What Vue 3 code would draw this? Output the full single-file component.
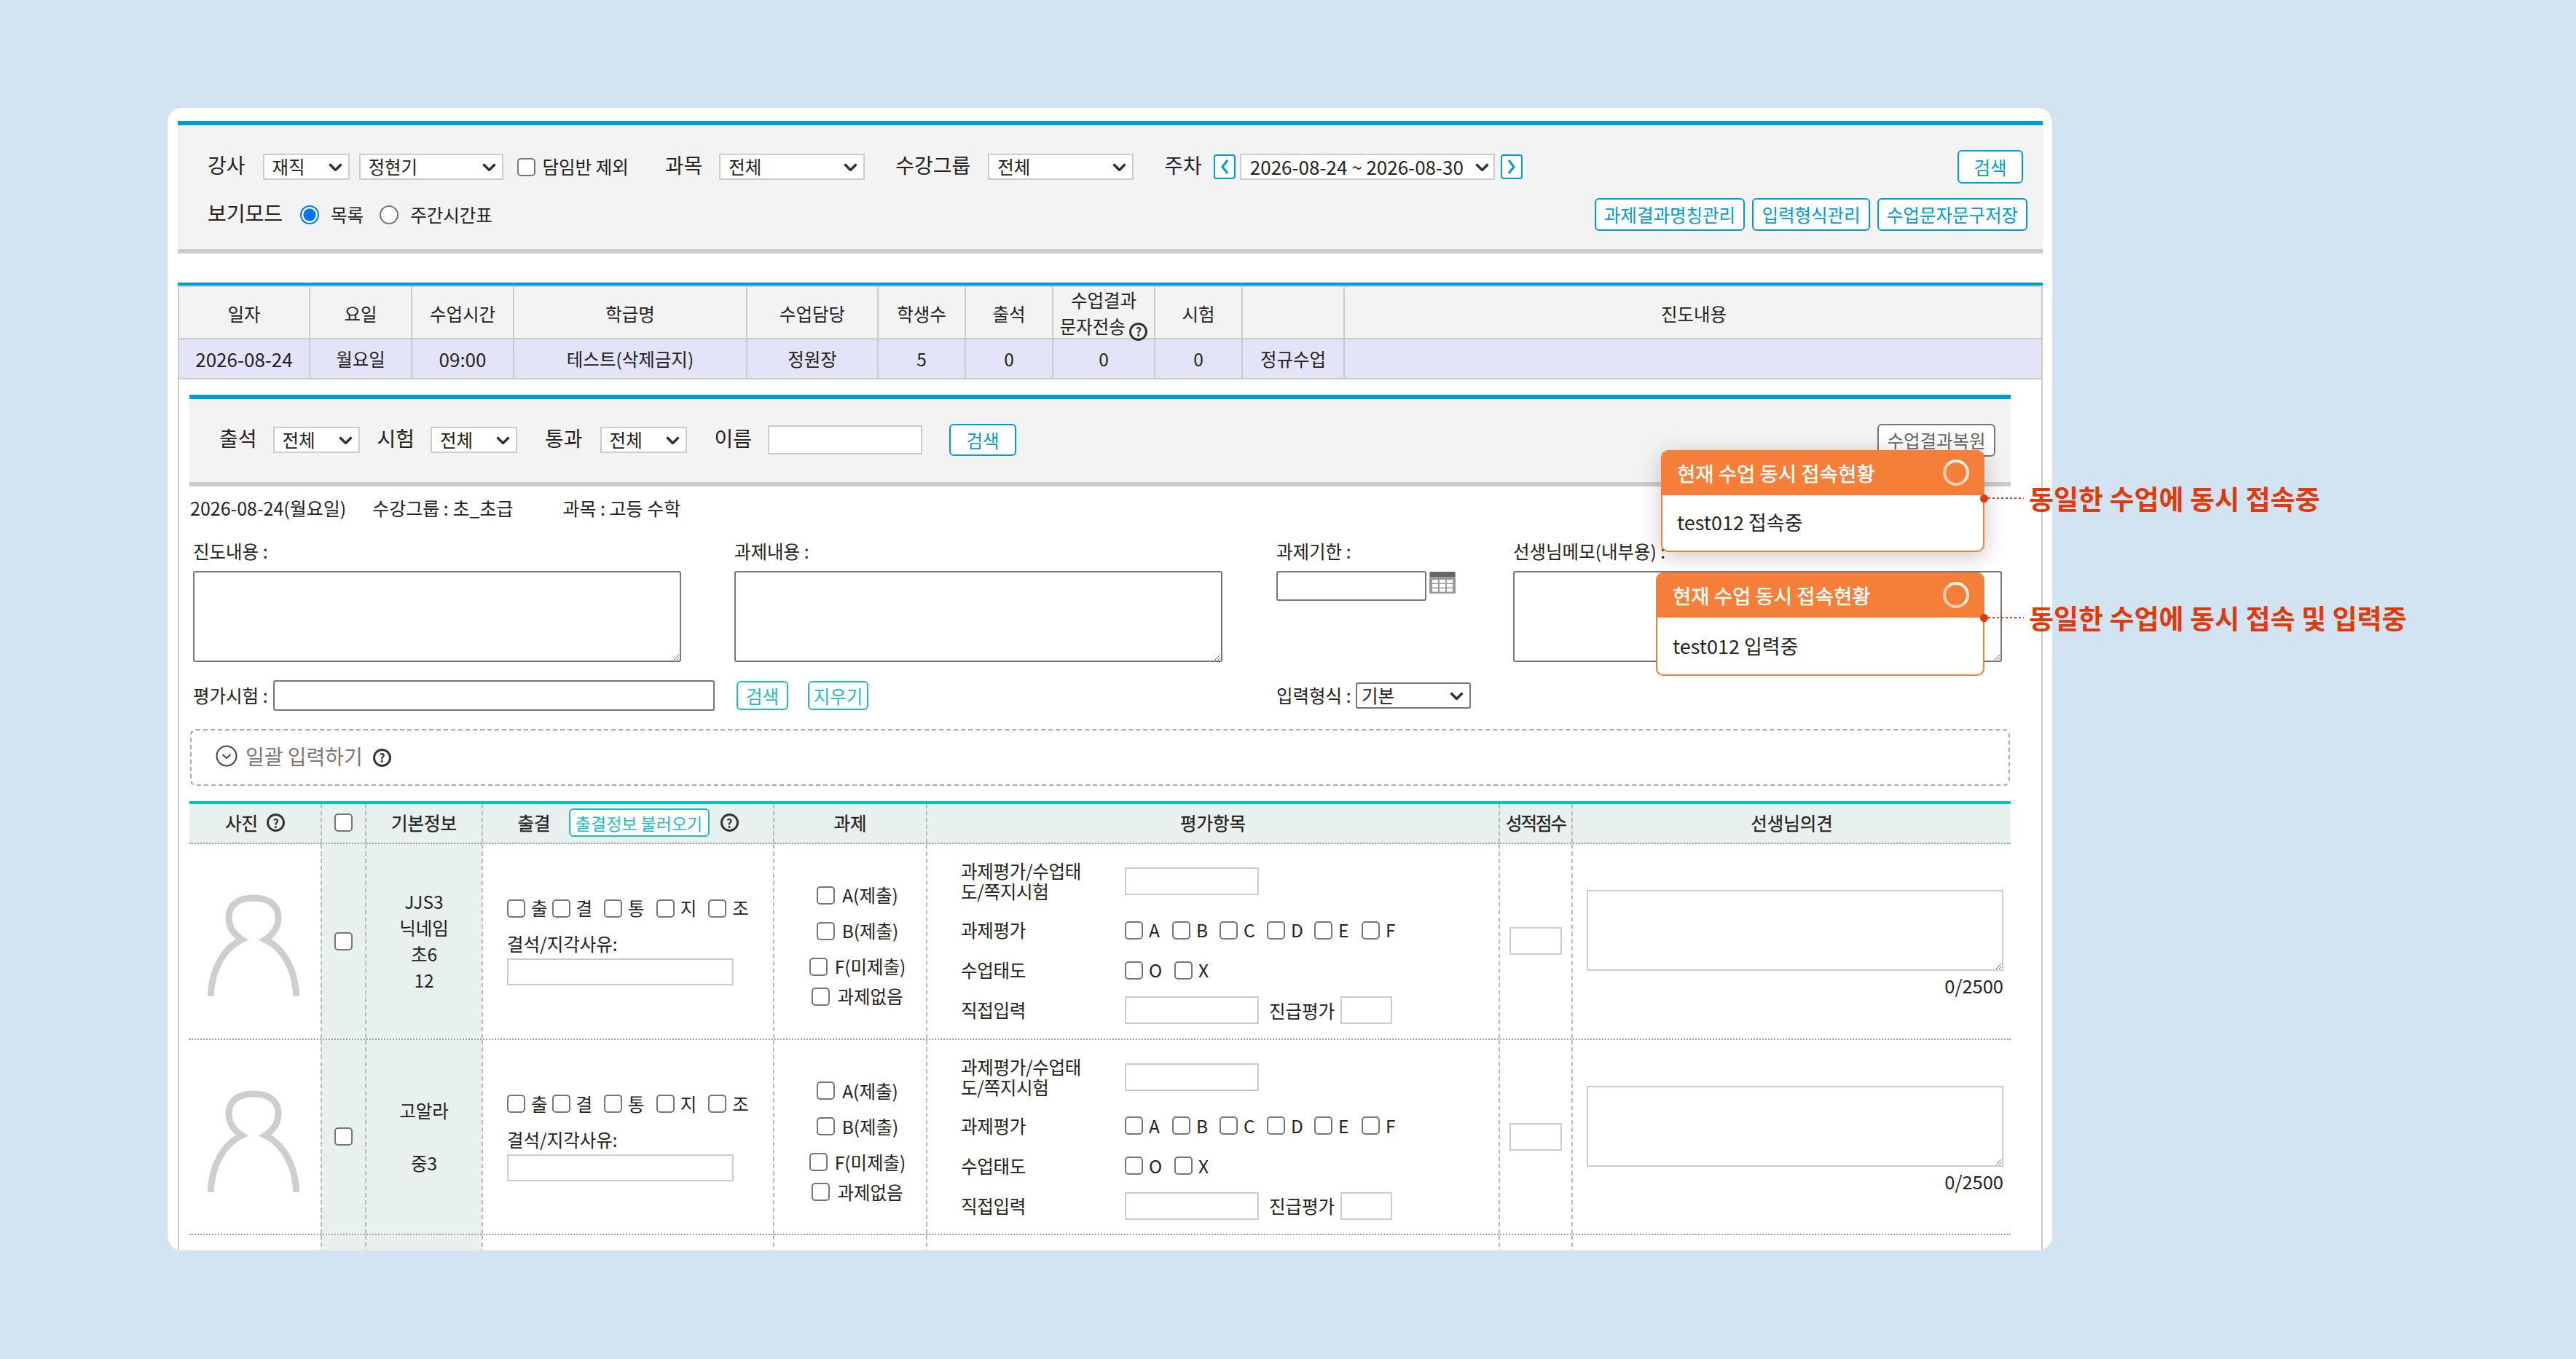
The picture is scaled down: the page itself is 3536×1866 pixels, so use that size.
<script setup>
const sumHead = ['일자','요일','수업시간','학급명','수업담당','학생수','출석','','시험','','진도내용']
const sumRow = ['2026-08-24','월요일','09:00','테스트(삭제금지)','정원장','5','0','0','0','정규수업','']
const atts = ['출','결','통','지','조']
const tasks = ['A(제출)','B(제출)','F(미제출)','과제없음']
const grades = ['A','B','C','D','E','F']
const students = [
  { lines: ['JJS3','닉네임','초6','12'] },
  { lines: ['고알라','\u00a0','중3'] },
]
</script>

<template>
  <div class="page">
    <div class="card">
      <section class="panel top">
        <div class="row r1">
          <span class="lb">강사</span>
          <select class="sel s1"><option>재직</option></select>
          <select class="sel s2"><option>정현기</option></select>
          <label class="chk c1"><input type="checkbox" class="box" /><span>담임반 제외</span></label>
          <span class="lb l2">과목</span>
          <select class="sel s3 s3a"><option>전체</option></select>
          <span class="lb l3">수강그룹</span>
          <select class="sel s3 s3b"><option>전체</option></select>
          <span class="lb l4">주차</span>
          <button class="arrow a1"><svg width="14" height="24" viewBox="0 0 14 24"><path d="M11 3 4 12l7 9" fill="none" stroke="#009ccd" stroke-width="3" /></svg></button>
          <select class="sel s4"><option>2026-08-24 ~ 2026-08-30</option></select>
          <button class="arrow a2"><svg width="14" height="24" viewBox="0 0 14 24"><path d="M3 3l7 9-7 9" fill="none" stroke="#009ccd" stroke-width="3" /></svg></button>
          <button class="btn search-top">검색</button>
        </div>
        <div class="row r2">
          <span class="lb">보기모드</span>
          <input type="radio" class="radio rd1" name="mode" checked />
          <span class="rtext">목록</span>
          <input type="radio" class="radio rd2" name="mode" />
          <span class="rtext">주간시간표</span>
          <div class="r2-btns">
            <button class="btn wide">과제결과명칭관리</button>
            <button class="btn mid">입력형식관리</button>
            <button class="btn wide">수업문자문구저장</button>
          </div>
        </div>
      </section>

      <section class="summary">
        <div class="sum-grid sum-head">
          <div v-for="(h, i) in sumHead" :key="i" class="sc">
            <template v-if="i === 7">
              <span class="two">수업결과<br />문자전송 <i class="help small">?</i></span>
            </template>
            <template v-else>{{ h }}</template>
          </div>
        </div>
        <div class="sum-grid sum-row">
          <div v-for="(c, i) in sumRow" :key="i" class="sc" :class="{ num: i === 0 || i === 2 }">{{ c }}</div>
        </div>
      </section>

      <section class="detail">
        <div class="panel sub">
          <span class="lb">출석</span>
          <select class="sel s5"><option>전체</option></select>
          <span class="lb m2">시험</span>
          <select class="sel s5"><option>전체</option></select>
          <span class="lb m3">통과</span>
          <select class="sel s5 m1b"><option>전체</option></select>
          <span class="lb m3">이름</span>
          <input type="text" class="inp name" />
          <button class="btn sub-search">검색</button>
          <button class="btn restore">수업결과복원</button>
        </div>

        <p class="info">
          <span class="i1">2026-08-24(월요일)</span>
          <span class="i2">수강그룹 : 초_초급</span>
          <span>과목 : 고등 수학</span>
        </p>

        <div class="fields">
          <div class="f-lb">진도내용 :</div>
          <div class="f-lb">과제내용 :</div>
          <div class="f-lb">과제기한 :</div>
          <div class="f-lb">선생님메모(내부용) :</div>
          <div><textarea class="ta big"></textarea></div>
          <div><textarea class="ta big"></textarea></div>
          <div class="date">
            <input type="text" class="dark-inp date-inp" />
            <svg class="cal" width="36" height="30" viewBox="0 0 36 30">
              <rect y="1" width="36" height="29" rx="1" fill="#999" />
              <rect x="1" width="34" height="7" fill="#666" />
              <g fill="#fff">
                <rect x="4" y="11" width="8" height="4.500" /><rect x="14" y="11" width="8" height="4.500" /><rect x="24" y="11" width="8" height="4.500" />
                <rect x="4" y="17" width="8" height="4.500" /><rect x="14" y="17" width="8" height="4.500" /><rect x="24" y="17" width="8" height="4.500" />
                <rect x="4" y="23" width="8" height="4.500" /><rect x="14" y="23" width="8" height="4.500" /><rect x="24" y="23" width="8" height="4.500" />
              </g>
            </svg>
          </div>
          <div><textarea class="ta memo"></textarea></div>
          <div class="exam">
            <span class="f-lb">평가시험 :</span>
            <input type="text" class="dark-inp exam-inp" />
            <button class="btn teal b-s">검색</button>
            <button class="btn teal b-c">지우기</button>
          </div>
          <div class="form-type">
            <span class="f-lb">입력형식 :</span>
            <select class="sel dark"><option>기본</option></select>
          </div>
        </div>

        <div class="bulk">
          <svg class="circle" width="30" height="30" viewBox="0 0 30 30"><circle cx="15" cy="15" r="13.500" fill="none" stroke="#444" stroke-width="2" /><path d="M9.500 13l5.500 5 5.500-5" fill="none" stroke="#444" stroke-width="2" /></svg>
          <span>일괄 입력하기</span>
          <i class="help">?</i>
        </div>

        <div class="students">
          <div class="st-grid st-head">
            <div class="cell"><span>사진</span><i class="help h-mar">?</i></div>
            <div class="cell"><input type="checkbox" class="box" /></div>
            <div class="cell">기본정보</div>
            <div class="cell att-h"><span>출결</span><button class="btn teal load">출결정보 불러오기</button><i class="help">?</i></div>
            <div class="cell">과제</div>
            <div class="cell">평가항목</div>
            <div class="cell tight">성적점수</div>
            <div class="cell">선생님의견</div>
          </div>

          <div v-for="(s, idx) in students" :key="idx" class="st-grid st-row">
            <div class="cell photo">
              <svg width="126" height="140" viewBox="0 0 126 140"><path d="M4 140C6 102 22 74 47 62 33 53 29 42 29 32 29 13 44 5 63 5s34 8 34 27c0 10-4 21-18 30 25 12 41 40 43 78" fill="none" stroke="#cecece" stroke-width="9" /></svg>
            </div>
            <div class="cell tint"><input type="checkbox" class="box" /></div>
            <div class="cell tint lines"><div v-for="(l, j) in s.lines" :key="j">{{ l }}</div></div>
            <div class="cell att">
              <div class="att-row">
                <label v-for="a in atts" :key="a" class="chk"><input type="checkbox" class="box" /><span>{{ a }}</span></label>
              </div>
              <div class="reason">결석/지각사유:</div>
              <input type="text" class="inp reason-inp" />
            </div>
            <div class="cell task">
              <label v-for="t in tasks" :key="t" class="chk"><input type="checkbox" class="box" /><span>{{ t }}</span></label>
            </div>
            <div class="cell evalc">
              <div class="ev ev1">
                <div class="ev-lb">과제평가/수업태도/쪽지시험</div>
                <input type="text" class="inp ev-inp" />
              </div>
              <div class="ev">
                <div class="ev-lb">과제평가</div>
                <label v-for="g in grades" :key="g" class="chk grade"><input type="checkbox" class="box" /><span>{{ g }}</span></label>
              </div>
              <div class="ev">
                <div class="ev-lb">수업태도</div>
                <label class="chk grade ox"><input type="checkbox" class="box" /><span>O</span></label>
                <label class="chk grade"><input type="checkbox" class="box" /><span>X</span></label>
              </div>
              <div class="ev">
                <div class="ev-lb">직접입력</div>
                <input type="text" class="inp ev-inp" />
                <span class="promo">진급평가</span>
                <input type="text" class="inp promo-inp" />
              </div>
            </div>
            <div class="cell score"><input type="text" class="inp score-inp" /></div>
            <div class="cell opinion">
              <textarea class="ta light"></textarea>
              <div class="count">0/2500</div>
            </div>
          </div>

          <div class="st-grid st-row">
            <div class="cell"></div><div class="cell tint"></div><div class="cell tint"></div><div class="cell"></div>
            <div class="cell"></div><div class="cell"></div><div class="cell"></div><div class="cell"></div>
          </div>
        </div>
      </section>
    </div>

    <div class="toast t1">
      <div class="t-head"><span>현재 수업 동시 접속현황</span><i class="ring"></i></div>
      <div class="t-body">test012 접속중</div>
    </div>
    <div class="toast t2">
      <div class="t-head"><span>현재 수업 동시 접속현황</span><i class="ring"></i></div>
      <div class="t-body">test012 입력중</div>
    </div>

    <div class="note n1"><i class="dot"></i><i class="leader"></i><span>동일한 수업에 동시 접속중</span></div>
    <div class="note n2"><i class="dot"></i><i class="leader"></i><span>동일한 수업에 동시 접속 및 입력중</span></div>
  </div>
</template>

<style scoped>
* { box-sizing: border-box; }
.page {
  position: relative;
  width: 3536px;
  height: 1866px;
  padding: 148px 0 0 230px;
  overflow: hidden;
  background: #d2e4f2;
  font-family: "Noto Sans CJK KR", "Noto Sans", sans-serif;
  font-size: 24.500px;
  color: #222;
}
.card {
  width: 2587px;
  height: 1569px;
  padding: 18px 13px 0 14px;
  background: #fff;
  border-radius: 20px;
  overflow: hidden;
}
.panel { background: #f3f3f3; border-top: 6px solid #009ccd; border-bottom: 6px solid #ccc; }
.top { width: 2560px; height: 182px; padding: 34px 21px 0 41px; }
.row { display: flex; align-items: center; }
.r1 { height: 46px; }
.r2 { height: 45px; margin-top: 20px; }
.lb { font-size: 28px; line-height: 36px; margin-bottom: 6px; white-space: nowrap; }
.sel {
  appearance: none;
  height: 36px;
  padding: 0 0 0 11px;
  border: 2px solid #ccc;
  border-radius: 0;
  background: #fff url("data:image/svg+xml,%3Csvg xmlns='http://www.w3.org/2000/svg' width='19' height='11'%3E%3Cpath d='M1.5 1.5 9.5 9.5 17.500 1.500' fill='none' stroke='%23333' stroke-width='3.500'/%3E%3C/svg%3E") no-repeat right 8px center;
  font: inherit;
  line-height: 32px;
  color: #222;
}
.s1 { width: 119px; margin-left: 24px; }
.s2 { width: 198px; margin-left: 13px; }
.c1 { margin-left: 19px; }
.c1 span { margin-left: 8px; }
.l2 { margin-left: 50px; }
.s3 { width: 200px; }
.s3a { margin-left: 23px; }
.s3b { margin-left: 24px; }
.l3 { margin-left: 42px; }
.l4 { margin-left: 42px; }
.a1 { margin-left: 16px; }
.s4 { width: 350px; margin-left: 6px; padding-left: 12px; font-size: 26px; background-position: right 6px center; }
.a2 { margin-left: 8px; }
.chk { display: inline-flex; align-items: center; white-space: nowrap; }
.chk span { margin-left: 10px; line-height: 32px; }
.box {
  appearance: none;
  width: 25px;
  height: 25px;
  margin: 0;
  flex: none;
  background: #fff;
  border: 2px solid #767676;
  border-radius: 5px;
}
.radio {
  appearance: none;
  width: 26px;
  height: 26px;
  margin: 0;
  flex: none;
  background: #fff;
  border: 2px solid #767676;
  border-radius: 50%;
}
.radio:checked { border-color: #0075ff; background: radial-gradient(circle, #0075ff 0 8px, #fff 9px); }
.rd1 { margin-left: 24px; }
.rd2 { margin-left: 22px; }
.rtext { margin-left: 16px; }
.arrow {
  display: flex;
  align-items: center;
  justify-content: center;
  width: 30px;
  height: 34px;
  padding: 0;
  background: #fff;
  border: 2px solid #009ccd;
  border-radius: 4px;
}
.btn {
  padding: 0;
  background: #fff;
  border: 2px solid #009ccd;
  border-radius: 6px;
  color: #009ccd;
  font: inherit;
  white-space: nowrap;
}
.search-top { width: 90px; height: 46px; margin-left: auto; margin-right: 6px; }
.r2-btns { display: flex; gap: 10px; margin-left: auto; }
.wide { width: 206px; height: 45px; }
.mid { width: 162px; height: 45px; }

.summary { width: 2560px; margin-top: 40px; border-top: 4px solid #009ccd; }
.sum-grid {
  display: grid;
  grid-template-columns: 180px 140px 140px 320px 180px 120px 120px 140px 120px 140px 960px;
  border-right: 2px solid #ccc;
}
.sc {
  display: flex;
  align-items: center;
  justify-content: center;
  border-left: 2px solid #ccc;
  white-space: nowrap;
}
.num { font-size: 26px; }
.sum-head { height: 74px; background: #f3f3f3; border-top: 2px solid #ccc; border-bottom: 2px solid #ccc; }
.sum-head .sc { padding-bottom: 2px; }
.sum-row { height: 55px; background: #e3e4f8; border-bottom: 2px solid #ccc; }
.two { line-height: 36px; text-align: center; }

.detail { width: 2560px; height: 1300px; padding: 21px 42px 0 14px; border-left: 2px solid #ccc; border-right: 2px solid #ccc; }
.sub { display: flex; align-items: center; height: 126px; padding: 0 0 2px 41px; }
.s5 { width: 119px; margin-left: 22px; }
.m2 { margin-left: 24px; }
.m3 { margin-left: 38px; }
.m1b { margin-left: 24px; }
.inp { height: 38px; background: #fff; border: 2px solid #ccc; border-radius: 0; }
.name { width: 212px; height: 40px; margin-left: 22px; }
.sub-search { width: 92px; height: 44px; margin-left: 37px; }
.restore { width: 162px; height: 45px; margin-left: auto; margin-right: 21px; border-color: #767676; color: #666; }

.info { margin: 11px 0 0; height: 36px; font-size: 25px; line-height: 36px; white-space: nowrap; }
.i1 { margin-left: 1px; }
.i2 { margin: 0 68px 0 36px; }
.fields {
  display: grid;
  grid-template-columns: 743px 744px 325px 671px;
  grid-template-rows: 36px 134px 67px;
  margin-top: 24px;
  padding-left: 5px;
}
.fields > :nth-child(n+5) { margin-top: 9px; }
.fields > :nth-child(n+9) { margin-top: 25px; }
.f-lb { line-height: 36px; white-space: nowrap; }
.ta { display: block; background: #fff; border: 2px solid #767676; border-radius: 3px; padding: 0; }
.big { width: 670px; height: 125px; }
.memo { width: 671px; height: 125px; }
.date { display: flex; align-items: flex-start; }
.dark-inp { background: #fff; border: 2px solid #767676; border-radius: 3px; }
.date-inp { width: 206px; height: 41px; }
.cal { margin: 1px 0 0 4px; }
.exam { grid-column: 1 / span 2; display: flex; align-items: center; height: 42px; }
.exam .f-lb { width: 110px; }
.exam-inp { width: 606px; height: 42px; }
.teal { border-color: #1cbdc2; color: #1cbdc2; }
.b-s { width: 71px; height: 40px; margin-left: 30px; }
.b-c { width: 83px; height: 40px; margin-left: 27px; }
.form-type { grid-column: 3 / span 2; display: flex; align-items: center; height: 42px; }
.form-type .f-lb { width: 109px; }
.dark { width: 158px; height: 36px; border-color: #767676; border-radius: 3px; padding-left: 6px; }

.bulk {
  display: flex;
  align-items: center;
  height: 78px;
  margin: 25px 1px 0;
  padding: 0 0 4px 33px;
  border: 2px dashed #aaa;
  border-radius: 8px;
  font-size: 28px;
  color: #777;
}
.bulk span { margin: 0 14px 0 11px; }
.help {
  display: inline-flex;
  align-items: center;
  justify-content: center;
  width: 25px;
  height: 25px;
  border: 3px solid #333;
  border-radius: 50%;
  color: #333;
  font-style: normal;
  font-size: 16px;
  font-weight: 700;
  line-height: 1;
}
.bulk .help { margin-top: 4px; }
.small { vertical-align: -4px; }

.students { width: 2500px; margin-top: 21px; border-top: 4px solid #00c5c5; }
.st-grid {
  display: grid;
  grid-template-columns: 180px 61px 160px 400px 210px 786px 100px 603px;
  border-bottom: 2px dotted #999;
}
.cell { border-left: 2px dashed #bbb; min-width: 0; }
.cell:first-child { border-left: none; }
.st-head { height: 55px; background: #e9f1ef; }
.st-head .cell { display: flex; align-items: center; justify-content: center; padding-bottom: 2px; white-space: nowrap; -webkit-text-stroke: .3px; }
.st-head .btn, .st-head .help { -webkit-text-stroke: 0; }
.h-mar { margin-left: 12px; }
.att-h span { margin-right: -2px; }
.att-h .btn { width: 193px; height: 39px; margin: 0 15px 0 27px; font-size: 23px; }
.tight { letter-spacing: -2px; }
.st-row { height: 268.500px; }
.tint { background: #e9f1ef; }
.photo { display: flex; justify-content: center; padding: 69px 4px 0 0; }
.st-row .tint:nth-child(2) { display: flex; align-items: center; justify-content: center; }
.lines { display: flex; flex-direction: column; justify-content: center; text-align: center; line-height: 36px; }
.att { padding: 72px 0 0 33px; }
.att-row { display: flex; }
.att-row .chk span { margin-left: 8px; }
.att-row .chk:first-child { margin-right: 6px; }
.att-row .chk:not(:first-child) { margin-right: 16px; }
.reason { margin-top: 21px; line-height: 24px; }
.reason-inp { display: block; width: 311px; height: 37px; margin-top: 8px; }
.task { display: flex; flex-direction: column; align-items: center; padding: 57px 0 0 20px; }
.task .chk { height: 26px; margin-bottom: 23px; }
.task .chk:nth-child(3) { margin-bottom: 15px; }
.evalc { padding: 25px 0 0 46px; }
.ev { display: flex; align-items: center; height: 40px; margin-bottom: 15px; }
.ev1 { height: 52px; margin-bottom: 21px; }
.ev-lb { width: 225px; flex: none; padding-right: 50px; line-height: 28px; letter-spacing: -.3px; }
.ev-inp { width: 184px; }
.grade { width: 65px; flex: none; }
.grade span { margin-left: 8px; }
.ox { width: 68px; }
.promo { margin: 0 8px 0 14px; white-space: nowrap; }
.promo-inp { width: 71px; }
.score { display: flex; align-items: center; padding-left: 13px; }
.score-inp { width: 72px; height: 38px; }
.opinion { padding: 63px 0 0 19px; }
.light { width: 572px; height: 111px; border-color: #ccc; border-radius: 0; }
.count { width: 572px; margin-top: 6px; text-align: right; line-height: 28px; font-size: 25.500px; }

.toast {
  position: absolute;
  z-index: 2;
  overflow: hidden;
  background: #fff;
  border: 2px solid #f57e38;
  border-radius: 10px;
}
.t1 { left: 2280px; top: 618px; width: 444px; height: 140px; box-shadow: 0 6px 30px rgba(0, 0, 0, .22); }
.t2 { left: 2273px; top: 786px; width: 451px; height: 142px; }
.t-head {
  display: flex;
  align-items: center;
  justify-content: space-between;
  height: 60px;
  padding: 0 19px 2px 20px;
  background: #f57e38;
  color: #fff;
  font-size: 27.500px;
  -webkit-text-stroke: .5px #fff;
}
.t2 .t-head { padding-left: 21px; }
.ring {
  width: 36px;
  height: 36px;
  border: 4px solid rgba(255, 255, 255, .6);
  border-top-color: rgba(255, 255, 255, .9);
  border-right-color: rgba(255, 255, 255, .85);
  border-radius: 50%;
}
.t-body { padding: 19px 20px 0; font-size: 27px; line-height: 36px; }
.t2 .t-body { padding: 21px 20px 0 21px; }
.note {
  position: absolute;
  z-index: 3;
  display: flex;
  align-items: center;
  left: 2718px;
  font-size: 37px;
  font-weight: 700;
  color: #e03a0c;
  white-space: nowrap;
  line-height: 40px;
}
.n1 { top: 664px; }
.n2 { top: 828px; }
.dot { width: 11px; height: 11px; background: #e03a0c; border-radius: 50%; }
.leader { width: 49px; height: 2px; background: repeating-linear-gradient(90deg, #e03a0c 0 3px, transparent 3px 6px); }
.note span { margin-left: 7px; }
</style>

<style>
html, body { margin: 0; padding: 0; background: #d2e4f2; }
</style>
